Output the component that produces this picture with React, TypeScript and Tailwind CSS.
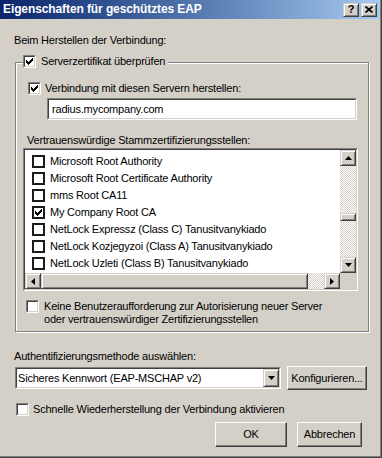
import type { ReactNode } from "react";

type BoxProps = {
  className?: string;
  innerClassName?: string;
  children?: ReactNode;
};

// 2px sunken frame (edit fields, list, combo)
function Sunken({ className = "", innerClassName = "", children }: BoxProps) {
  return (
    <div
      className={`border border-t-[#808080] border-l-[#808080] border-r-white border-b-white ${className}`}
    >
      <div
        className={`h-full w-full border border-t-[#404040] border-l-[#404040] border-r-[#D4D0C8] border-b-[#D4D0C8] bg-white ${innerClassName}`}
      >
        {children}
      </div>
    </div>
  );
}

// raised bevel used by scroll bar parts and caption buttons
function Raised({ className = "", children }: BoxProps) {
  return (
    <div
      className={`border border-t-[#D4D0C8] border-l-[#D4D0C8] border-r-[#404040] border-b-[#404040] bg-[#D4D0C8] shadow-[inset_1px_1px_0_#fff,inset_-1px_-1px_0_#808080] flex items-center justify-center ${className}`}
    >
      {children}
    </div>
  );
}

function PushButton({ className = "", children }: BoxProps) {
  return (
    <div
      className={`border border-t-white border-l-white border-r-[#404040] border-b-[#404040] bg-[#D4D0C8] shadow-[inset_-1px_-1px_0_#808080] flex items-center justify-center ${className}`}
    >
      {children}
    </div>
  );
}

function Tick() {
  return (
    <svg width="7" height="7" viewBox="0 0 7 7" className="block">
      <path
        d="M0 2h1v3H0z M1 3h1v3H1z M2 4h1v3H2z M3 3h1v3H3z M4 2h1v3H4z M5 1h1v3H5z M6 0h1v3H6z"
        fill="#000"
      />
    </svg>
  );
}

function Checkbox({ checked = false }: { checked?: boolean }) {
  return (
    <Sunken
      className="w-[13px] h-[13px] shrink-0"
      innerClassName="flex items-center justify-center"
    >
      {checked && <Tick />}
    </Sunken>
  );
}

function FlatCheckbox({ checked = false }: { checked?: boolean }) {
  return (
    <div className="w-[13px] h-[13px] shrink-0 border-2 border-[#1c1c1c] bg-white flex items-center justify-center">
      {checked && <Tick />}
    </div>
  );
}

function Arrow({ dir }: { dir: "up" | "down" | "left" | "right" }) {
  const pts = {
    up: "3.5,0 7,4 0,4",
    down: "0,0 7,0 3.5,4",
    left: "4,0 4,7 0,3.5",
    right: "0,0 4,3.5 0,7",
  }[dir];
  const vertical = dir === "up" || dir === "down";
  return (
    <svg
      width={vertical ? 7 : 4}
      height={vertical ? 4 : 7}
      viewBox={vertical ? "0 0 7 4" : "0 0 4 7"}
      className="block"
    >
      <polygon points={pts} fill="#000" />
    </svg>
  );
}

const dither =
  "bg-[image:repeating-conic-gradient(#fff_0_25%,#D4D0C8_0_50%)] bg-[length:2px_2px]";

const certs = [
  { name: "Microsoft Root Authority", checked: false },
  { name: "Microsoft Root Certificate Authority", checked: false },
  { name: "mms Root CA11", checked: false },
  { name: "My Company Root CA", checked: true },
  { name: "NetLock Expressz (Class C) Tanusitvanykiado", checked: false },
  { name: "NetLock Kozjegyzoi (Class A) Tanusitvanykiado", checked: false },
  { name: "NetLock Uzleti (Class B) Tanusitvanykiado", checked: false },
];

export default function App() {
  return (
    <div className="w-[382px] h-[458px] bg-[#D4D0C8] border-r border-b border-[#404040] font-['Liberation_Sans',Arial,sans-serif] text-[11px] leading-[13px] tracking-[-0.2px] text-black overflow-hidden select-none">
      <div className="h-full border-r border-b border-[#808080] flex flex-col">
        {/* ── title bar ── */}
        <div className="h-[19px] shrink-0 flex items-center px-[3px] bg-linear-to-r from-[#0A246A] to-[#A6CAF0]">
          <span className="text-white font-bold text-[12px] tracking-[-0.1px]">
            Eigenschaften für geschütztes EAP
          </span>
          <div className="ml-auto flex gap-[2px]">
            <Raised className="w-[16px] h-[14px]">
              <span className="font-bold text-[11px] leading-none tracking-normal">?</span>
            </Raised>
            <Raised className="w-[16px] h-[14px]">
              <svg width="8" height="7" viewBox="0 0 8 7" className="block">
                <path d="M0.5 0.5L7.5 6.5M7.5 0.5L0.5 6.5" stroke="#000" strokeWidth="1.7" />
              </svg>
            </Raised>
          </div>
        </div>

        <p className="mt-[15px] ml-[14px]">Beim Herstellen der Verbindung:</p>

        {/* ── server certificate group ── */}
        <div className="mt-[15px] ml-[15px] w-[354px] border border-[#808080] shadow-[inset_1px_1px_0_#fff,1px_1px_0_#fff] pb-[5px]">
          <div className="-mt-[8px] ml-[7px] w-fit flex items-center gap-[5px] bg-[#D4D0C8] pr-[3px]">
            <Checkbox checked />
            <span>Serverzertifikat überprüfen</span>
          </div>

          <div className="mt-[14px] ml-[12px] flex items-center gap-[4px]">
            <Checkbox checked />
            <span>Verbindung mit diesen Servern herstellen:</span>
          </div>
          <Sunken
            className="mt-[3px] ml-[31px] w-[310px] h-[22px]"
            innerClassName="flex items-center pl-[3px]"
          >
            radius.mycompany.com
          </Sunken>

          <p className="mt-[14px] ml-[11px]">
            Vertrauenswürdige Stammzertifizierungsstellen:
          </p>
          <Sunken
            className="mt-[1px] ml-[7px] w-[335px] h-[143px]"
            innerClassName="grid grid-cols-[1fr_16px] grid-rows-[1fr_16px] overflow-hidden"
          >
            <div className="pt-[3px] overflow-hidden">
              {certs.map((c) => (
                <div
                  key={c.name}
                  className="h-[17px] flex items-center gap-[5px] pl-[7px] whitespace-nowrap"
                >
                  <FlatCheckbox checked={c.checked} />
                  <span>{c.name}</span>
                </div>
              ))}
            </div>
            {/* vertical scroll bar */}
            <div className="flex flex-col">
              <Raised className="h-[16px] shrink-0">
                <Arrow dir="up" />
              </Raised>
              <div className={`flex-1 flex flex-col ${dither}`}>
                <div className="h-[47px]" />
                <Raised className="h-[8px]" />
              </div>
              <Raised className="h-[16px] shrink-0">
                <Arrow dir="down" />
              </Raised>
            </div>
            {/* horizontal scroll bar */}
            <div className="flex">
              <Raised className="w-[16px] shrink-0">
                <Arrow dir="left" />
              </Raised>
              <Raised className="w-[267px] shrink-0" />
              <div className={`flex-1 ${dither}`} />
              <Raised className="w-[16px] shrink-0">
                <Arrow dir="right" />
              </Raised>
            </div>
            <div className="bg-[#D4D0C8]" />
          </Sunken>

          <div className="mt-[9px] ml-[10px] flex items-start gap-[5px]">
            <Checkbox />
            <span>
              Keine Benutzeraufforderung zur Autorisierung neuer Server
              <br />
              oder vertrauenswürdiger Zertifizierungsstellen
            </span>
          </div>
        </div>

        {/* ── authentication method ── */}
        <p className="mt-[18px] ml-[14px]">Authentifizierungsmethode auswählen:</p>
        <div className="mt-[3px] ml-[15px] flex items-center gap-[6px]">
          <Sunken className="w-[266px] h-[22px]" innerClassName="flex items-center">
            <span className="flex-1 pl-[1px]">Sicheres Kennwort (EAP-MSCHAP v2)</span>
            <Raised className="w-[16px] h-full">
              <Arrow dir="down" />
            </Raised>
          </Sunken>
          <PushButton className="w-[80px] h-[24px]">Konfigurieren...</PushButton>
        </div>

        <div className="mt-[13px] ml-[16px] flex items-center gap-[4px]">
          <Checkbox />
          <span>Schnelle Wiederherstellung der Verbindung aktivieren</span>
        </div>

        {/* ── dialog buttons ── */}
        <div className="mt-[6px] pr-[18px] flex justify-end gap-[10px]">
          <PushButton className="w-[72px] h-[25px]">OK</PushButton>
          <PushButton className="w-[65px] h-[25px]">Abbrechen</PushButton>
        </div>
      </div>
    </div>
  );
}
